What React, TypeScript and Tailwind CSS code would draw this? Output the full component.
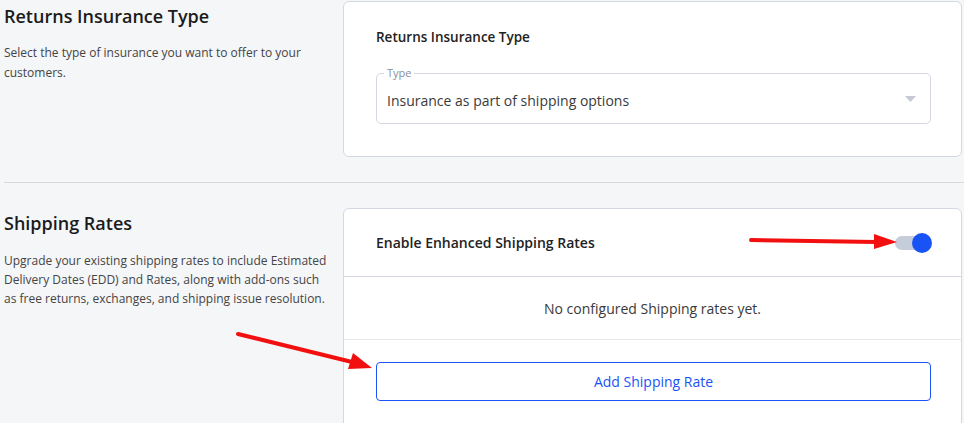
import React from "react";

export default function App() {
  return (
    <div
      className="relative w-[964px] h-[423px] overflow-hidden bg-[#f5f6f8] text-[#222]"
      style={{ fontFamily: "'Open Sans', 'Noto Sans', sans-serif" }}
    >
      {/* Section 1 */}
      <div className="flex pl-[4px] pt-[1px]">
        <div className="w-[339px] shrink-0 pr-4">
          <h2 className="text-[18px] leading-[28px] font-semibold text-[#1b1b1b] mt-[1px]">Returns Insurance Type</h2>
          <p className="mt-[13px] text-[12px] leading-[20px] text-[#444]">
            Select the type of insurance you want to offer to your customers.
          </p>
        </div>
        <div className="w-[619px] h-[156px] rounded-[6px] border border-[#d3d8e2] bg-white pl-[32px] pr-[30px] pt-[25px]">
          <div className="text-[13.5px] leading-[20px] font-semibold text-[#222]">Returns Insurance Type</div>
          <div className="relative mt-[26px] h-[51px] rounded-[5px] border border-[#d3d8e2] flex items-center px-[10px]">
            <span className="absolute -top-[8px] left-[7px] bg-white px-[3px] text-[11px] leading-[14px] text-[#8a8f98]">Type</span>
            <span className="mt-[4px] text-[14px] text-[#3a3a3a]">Insurance as part of shipping options</span>
            <svg className="ml-auto mr-[4px]" width="11" height="6" viewBox="0 0 11 6">
              <path d="M0 0 L11 0 L5.5 6 Z" fill="#c4c9d4" />
            </svg>
          </div>
        </div>
      </div>

      {/* Divider */}
      <div className="ml-[4px] mt-[25px] h-px bg-[#d6d9de]" />

      {/* Section 2 */}
      <div className="flex pl-[4px] pt-[25px]">
        <div className="w-[339px] shrink-0 pr-4">
          <h2 className="text-[18px] leading-[28px] font-semibold text-[#1b1b1b] mt-[1px]">Shipping Rates</h2>
          <p className="mt-[14px] text-[12px] leading-[19px] text-[#444]">
            Upgrade your existing shipping rates to include Estimated Delivery Dates (EDD) and Rates, along with add-ons such as free returns, exchanges, and shipping issue resolution.
          </p>
        </div>
        <div className="w-[619px] h-[240px] rounded-[6px] border border-[#d3d8e2] bg-white">
          <div className="h-[68px] flex items-center justify-between pl-[32px] pr-[29px] border-b border-[#d3d8e2]">
            <span className="text-[14px] font-semibold text-[#222]">Enable Enhanced Shipping Rates</span>
            <div className="relative w-[37px] h-[20px] flex items-center">
              <div className="w-[34px] h-[14px] rounded-full bg-[#c5ccda]" />
              <div className="absolute right-0 w-[20px] h-[20px] rounded-full bg-[#1a53f5]" />
            </div>
          </div>
          <div className="h-[63px] flex items-center justify-center border-b border-[#e3e6eb]">
            <span className="text-[14px] text-[#3a3a3a]">No configured Shipping rates yet.</span>
          </div>
          <div className="pl-[32px] pr-[30px] pt-[22px]">
            <button className="w-full h-[39px] rounded-[4px] border border-[#1a53f5] text-[#1a53f5] text-[14px] bg-white">
              Add Shipping Rate
            </button>
          </div>
        </div>
      </div>

      {/* Annotation arrows */}
      <svg className="absolute left-0 top-0 pointer-events-none" width="964" height="423">
        <line x1="751" y1="240" x2="876" y2="242" stroke="#f20f0f" strokeWidth="4" strokeLinecap="round" />
        <polygon points="874,234 897,242 874,249" fill="#f20f0f" />
        <line x1="238" y1="334" x2="352" y2="362" stroke="#f20f0f" strokeWidth="4" strokeLinecap="round" />
        <polygon points="353,353 372,368 348,369" fill="#f20f0f" />
      </svg>
    </div>
  );
}
